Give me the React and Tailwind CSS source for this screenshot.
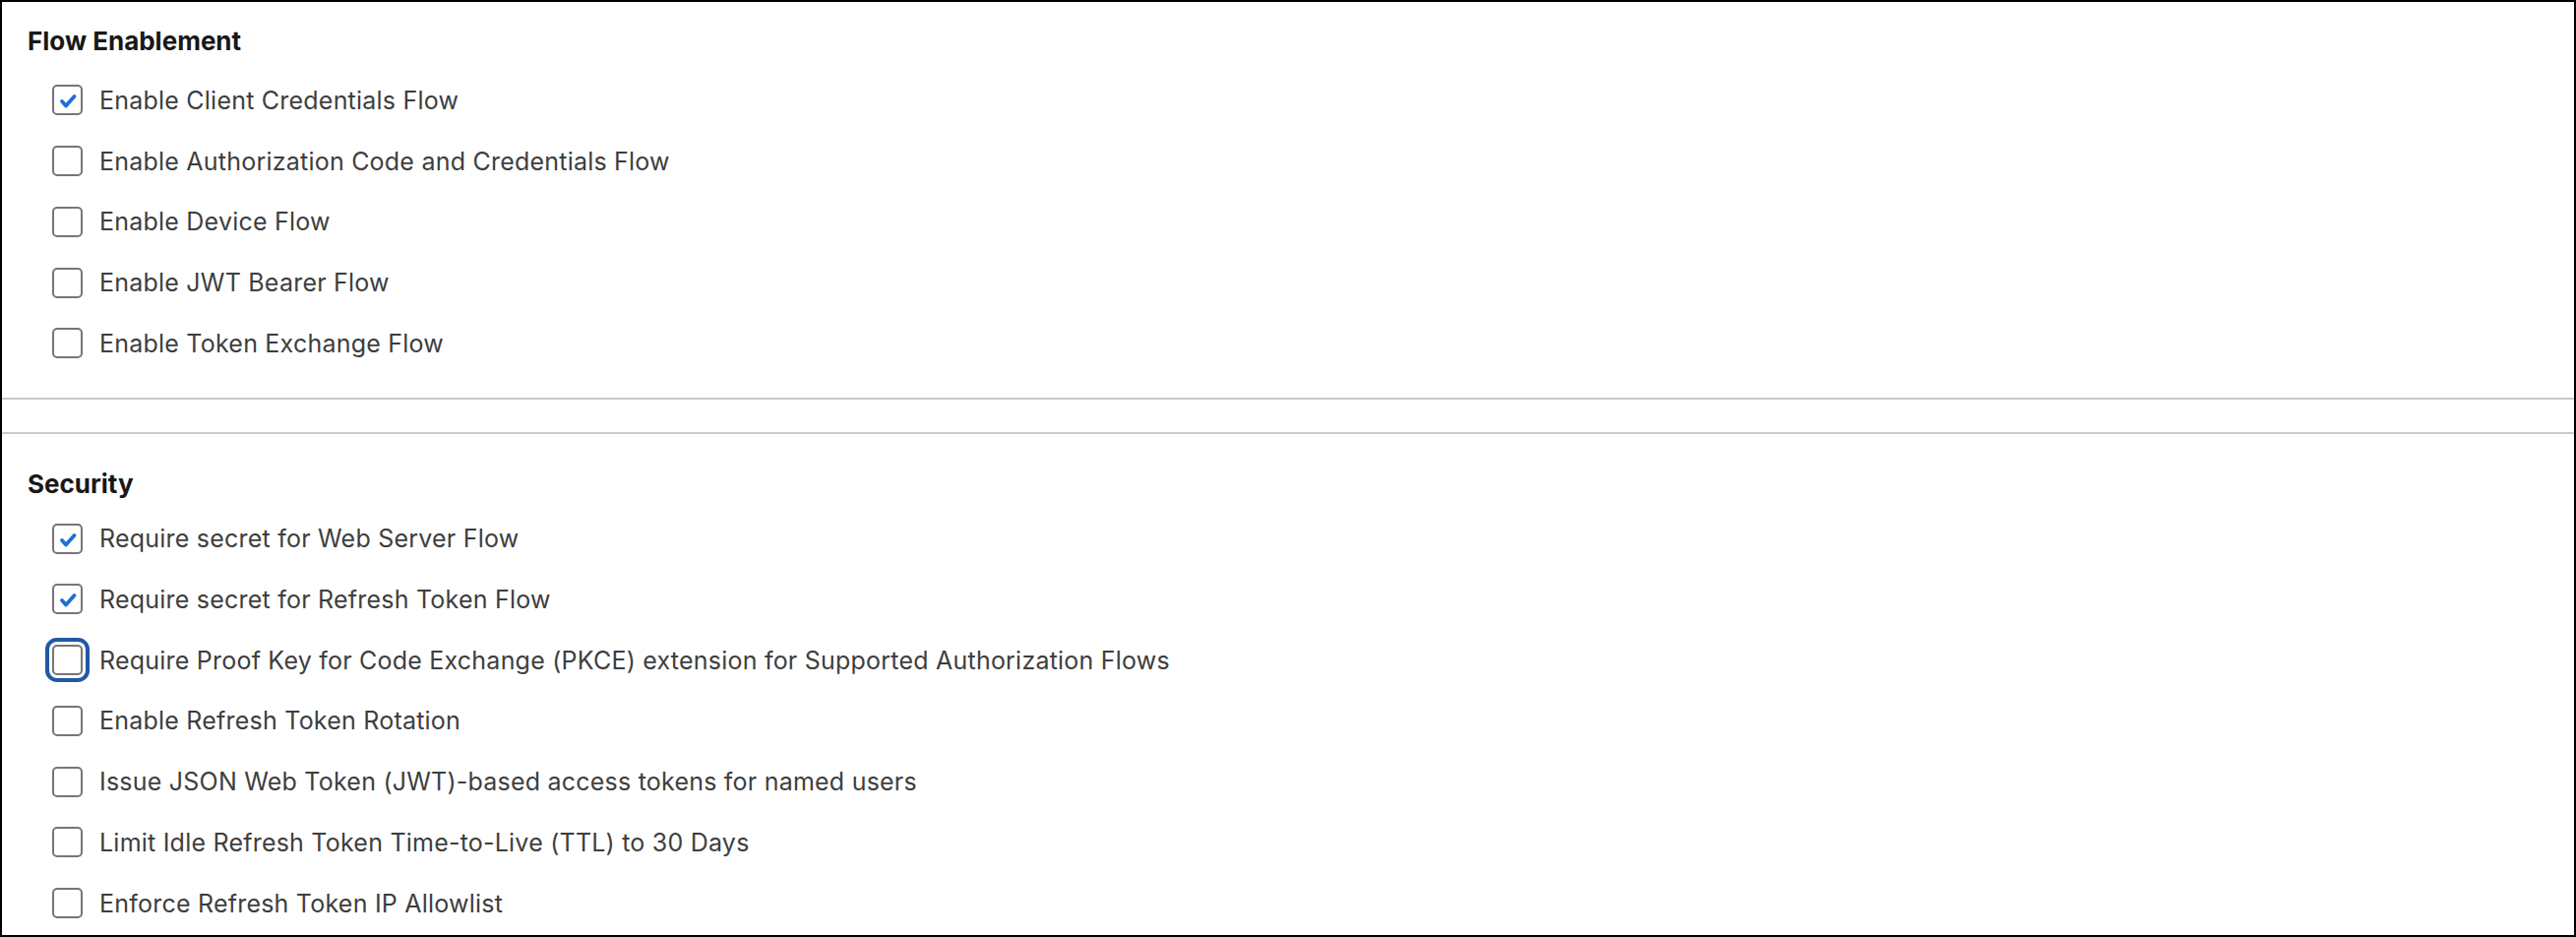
import React from "react";

const font = { fontFamily: "Inter, 'Liberation Sans', sans-serif" };

function Box({ checked, focused }) {
  return (
    <span
      className={
        "relative inline-block w-[31px] h-[31px] shrink-0 rounded-[5px] border-2 border-[#767676] bg-white " +
        (focused ? "ring-[4px] ring-[#2158a6] ring-offset-[3px] ring-offset-white" : "")
      }
    >
      {checked && (
        <svg
          className="absolute left-[-2px] top-[-2px]"
          width="31"
          height="31"
          viewBox="0 0 31 31"
          fill="none"
        >
          <path
            d="M10 17 L14 21.5 L22.5 12"
            stroke="#1f6fd6"
            strokeWidth="3.8"
            strokeLinecap="round"
            strokeLinejoin="round"
          />
        </svg>
      )}
    </span>
  );
}

function Row({ label, checked, focused }) {
  return (
    <div className="h-[61.75px] flex items-center pl-[51px]">
      <Box checked={checked} focused={focused} />
      <span className="ml-[17px] text-[25px] leading-[30px] tracking-[0.22px] text-[#3e3e3e]">{label}</span>
    </div>
  );
}

export default function App() {
  const flows = [
    ["Enable Client Credentials Flow", true],
    ["Enable Authorization Code and Credentials Flow", false],
    ["Enable Device Flow", false],
    ["Enable JWT Bearer Flow", false],
    ["Enable Token Exchange Flow", false],
  ];
  const security = [
    ["Require secret for Web Server Flow", true],
    ["Require secret for Refresh Token Flow", true],
    ["Require Proof Key for Code Exchange (PKCE) extension for Supported Authorization Flows", false, true],
    ["Enable Refresh Token Rotation", false],
    ["Issue JSON Web Token (JWT)-based access tokens for named users", false],
    ["Limit Idle Refresh Token Time-to-Live (TTL) to 30 Days", false],
    ["Enforce Refresh Token IP Allowlist", false],
  ];
  return (
    <div style={font} className="w-[2618px] h-[952px] border-2 border-black bg-white overflow-hidden flex flex-col">
      <div className="pl-[26px] pt-[25px]">
        <h2 className="text-[26px] leading-[30px] font-bold text-[#181818]">Flow Enablement</h2>
      </div>
      <div className="pt-[14px] pb-[24px]">
        {flows.map(([l, c]) => (
          <Row key={l} label={l} checked={c} />
        ))}
      </div>
      <div className="h-[2px] bg-[#c9c9c9]" />
      <div className="h-[33px]" />
      <div className="h-[2px] bg-[#c9c9c9]" />
      <div className="pl-[26px] pt-[36px]">
        <h2 className="text-[26px] leading-[30px] font-bold text-[#181818]">Security</h2>
      </div>
      <div className="pt-[9.5px]">
        {security.map(([l, c, f]) => (
          <Row key={l} label={l} checked={c} focused={f} />
        ))}
      </div>
    </div>
  );
}
